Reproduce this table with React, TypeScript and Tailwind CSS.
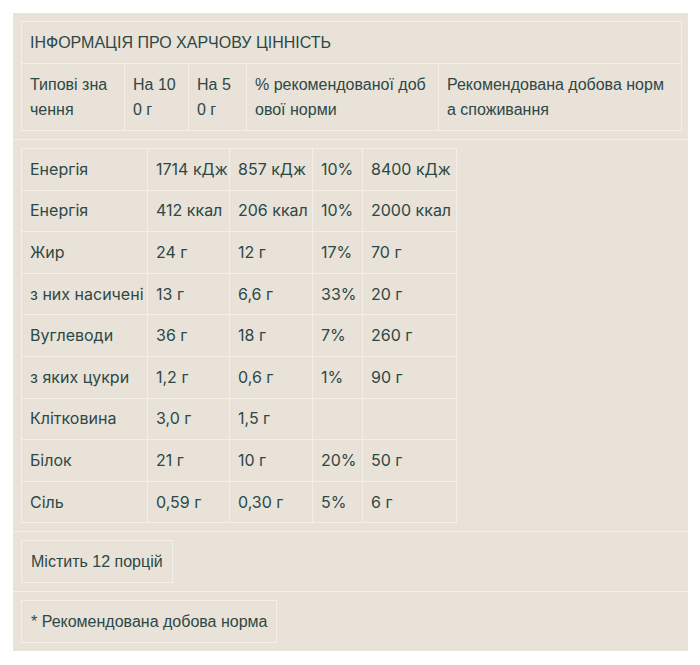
import React from 'react';

const rows: [string, string, string, string, string][] = [
  ['Енергія', '1714 кДж', '857 кДж', '10%', '8400 кДж'],
  ['Енергія', '412 ккал', '206 ккал', '10%', '2000 ккал'],
  ['Жир', '24 г', '12 г', '17%', '70 г'],
  ['з них насичені', '13 г', '6,6 г', '33%', '20 г'],
  ['Вуглеводи', '36 г', '18 г', '7%', '260 г'],
  ['з яких цукри', '1,2 г', '0,6 г', '1%', '90 г'],
  ['Клітковина', '3,0 г', '1,5 г', '', ''],
  ['Білок', '21 г', '10 г', '20%', '50 г'],
  ['Сіль', '0,59 г', '0,30 г', '5%', '6 г'],
];

const head: [string, string][] = [
  ['Типові зна', 'чення'],
  ['На 10', '0 г'],
  ['На 5', '0 г'],
  ['% рекомендованої доб', 'ової норми'],
  ['Рекомендована добова норм', 'а споживання'],
];

const cell = 'border border-[#f4efe7] px-2 py-2 align-top leading-[25px]';

const App = () => {
  return (
    <div className="min-h-screen bg-white pt-[13px] pl-[13px]">
      <div className="w-[675px] bg-[#e8e2d9] text-[#2d4845] text-[16px] font-['Liberation_Sans',Arial,sans-serif]">
        {/* шапка */}
        <div className="p-2 border-b border-[#f4efe7]">
          <table className="w-[660px] table-fixed border-collapse">
            <colgroup>
              <col className="w-[103px]" />
              <col className="w-[64px]" />
              <col className="w-[58px]" />
              <col className="w-[192px]" />
              <col className="w-[243px]" />
            </colgroup>
            <tbody>
              <tr>
                <td colSpan={5} className={cell}>ІНФОРМАЦІЯ ПРО ХАРЧОВУ ЦІННІСТЬ</td>
              </tr>
              <tr>
                {head.map(([a, b], i) => (
                  <td key={i} className={cell}>
                    <span className="block whitespace-nowrap">{a}</span>
                    <span className="block whitespace-nowrap">{b}</span>
                  </td>
                ))}
              </tr>
            </tbody>
          </table>
        </div>

        {/* значення */}
        <div className="p-2 border-b border-[#f4efe7]">
          <table className="w-[435px] table-fixed border-collapse font-['Inter',sans-serif]">
            <colgroup>
              <col className="w-[126px]" />
              <col className="w-[82px]" />
              <col className="w-[83px]" />
              <col className="w-[50px]" />
              <col className="w-[94px]" />
            </colgroup>
            <tbody>
              {rows.map((r, i) => (
                <tr key={i}>
                  {r.map((v, j) => (
                    <td key={j} className="border border-[#f4efe7] px-2 py-[7.8px] align-top leading-[25px] whitespace-nowrap">{v}</td>
                  ))}
                </tr>
              ))}
            </tbody>
          </table>
        </div>

        <div className="p-2 border-b border-[#f4efe7]">
          <div className="inline-block border border-[#f4efe7] px-[9px] py-2 leading-[25px]">Містить 12 порцій</div>
        </div>

        <div className="p-2">
          <div className="inline-block border border-[#f4efe7] px-[9px] py-2 leading-[25px]">* Рекомендована добова норма</div>
        </div>
      </div>
    </div>
  );
};

export default App;
